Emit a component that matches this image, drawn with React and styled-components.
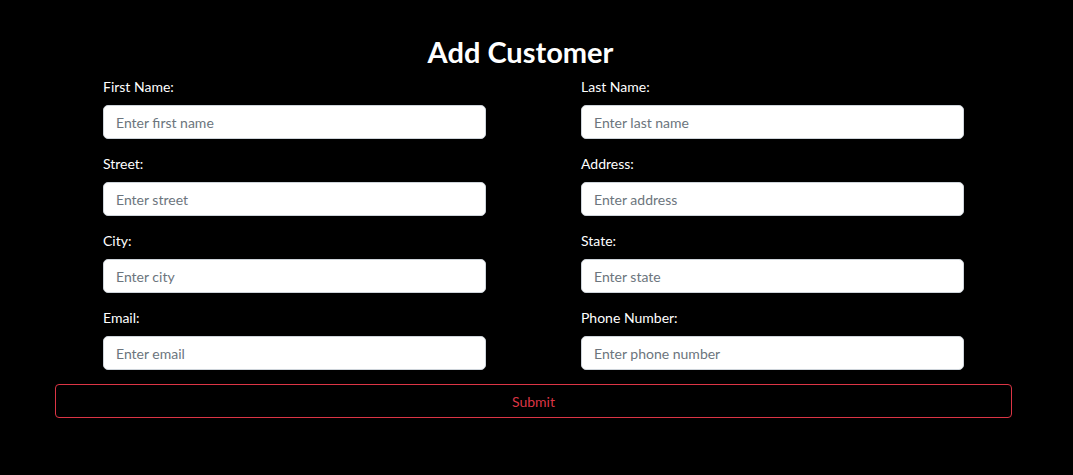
import React from 'react'
import styled, { createGlobalStyle } from 'styled-components';

const GlobalStyle = createGlobalStyle`
  html, body {
    margin: 0;
    padding: 0;
    background: #000;
    font-family: Lato, "Open Sans", sans-serif;
  }
  * { box-sizing: border-box; }
`;

const Page = styled.div`
  width: 957px;
  margin: 0 0 0 55px;
  padding-top: 33px;
  min-height: 475px;
`;

const Title = styled.h2`
  margin: 0 0 5px 0;
  padding-right: 26px;
  text-align: center;
  color: #fff;
  font-size: 29px;
  font-weight: 700;
  line-height: 38px;
`;

const Grid = styled.div`
  display: grid;
  grid-template-columns: 1fr 1fr;
  column-gap: 95px;
  row-gap: 14px;
  padding: 0 48px;
`;

const Field = styled.div`
  display: flex;
  flex-direction: column;
`;

const Label = styled.label`
  color: #fff;
  font-size: 14px;
  line-height: 21px;
  margin-bottom: 8px;
`;

const Input = styled.input`
  height: 34px;
  padding: 0 12px;
  border: 1px solid #ced4da;
  border-radius: 5px;
  background: #fff;
  font-family: inherit;
  font-size: 14px;
  color: #212529;
  outline: none;

  &::placeholder {
    color: #6c757d;
  }
`;

const SubmitButton = styled.button`
  display: block;
  width: 100%;
  height: 34px;
  margin-top: 14px;
  background: transparent;
  border: 1px solid #dc3545;
  border-radius: 4px;
  color: #dc3545;
  font-family: inherit;
  font-size: 14px;
  cursor: pointer;
`;

const fields = [
  ['First Name:', 'Enter first name'],
  ['Last Name:', 'Enter last name'],
  ['Street:', 'Enter street'],
  ['Address:', 'Enter address'],
  ['City:', 'Enter city'],
  ['State:', 'Enter state'],
  ['Email:', 'Enter email'],
  ['Phone Number:', 'Enter phone number'],
];

const App = () => {
  return (
    <>
      <GlobalStyle />
      <Page>
        <Title>Add Customer</Title>
        <form onSubmit={(e) => e.preventDefault()}>
          <Grid>
            {fields.map(([label, placeholder]) => (
              <Field key={label}>
                <Label>{label}</Label>
                <Input type="text" placeholder={placeholder} />
              </Field>
            ))}
          </Grid>
          <SubmitButton type="submit">Submit</SubmitButton>
        </form>
      </Page>
    </>
  )
}

export default App
